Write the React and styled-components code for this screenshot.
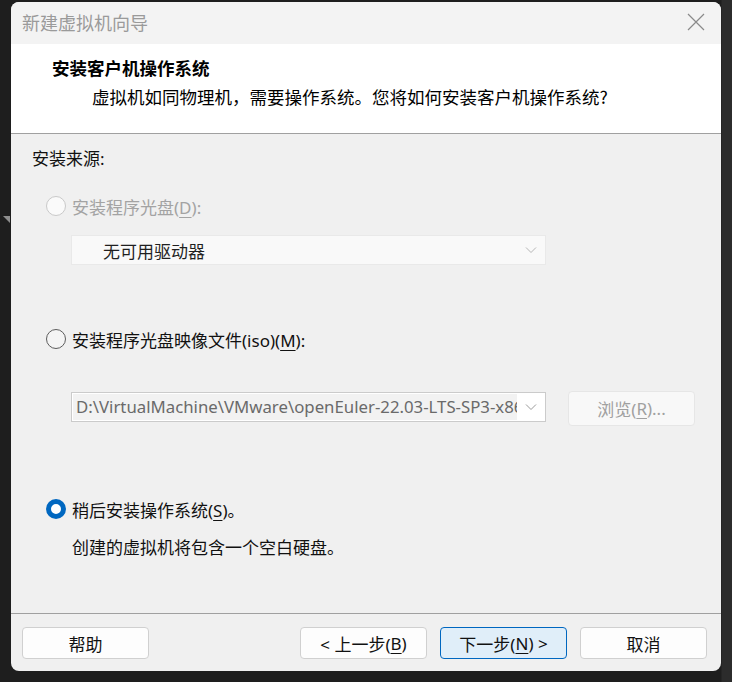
import React from "react";
import styled, { createGlobalStyle } from "styled-components";

const Global = createGlobalStyle`
  html, body { margin: 0; padding: 0; background: #1d1d1d; }
  body { font-family: "Noto Sans", "Noto Sans CJK SC", sans-serif; }
  #root { width: 732px; height: 682px; overflow: hidden; }
`;

const Page = styled.div`
  width: 732px;
  height: 682px;
  box-sizing: border-box;
  padding: 2px 11px 0 11px;
  background: linear-gradient(to right, #1e1e1e 0 721px, #2c2c2c 722px);
  position: relative;
`;

const Notch = styled.div`
  position: absolute;
  left: 3px;
  top: 216px;
  width: 0;
  height: 0;
  border-left: 7px solid transparent;
  border-top: 7px solid #8e8e8e;
`;

const Window = styled.div`
  width: 710px;
  height: 669px;
  border-radius: 8px;
  overflow: hidden;
  background: #f0f0f0;
  display: flex;
  flex-direction: column;
`;

const TitleBar = styled.div`
  height: 42px;
  flex: none;
  background: #f3f3f3;
  display: flex;
  align-items: center;
  justify-content: space-between;
  padding: 0 16px 0 11px;
`;

const TitleText = styled.div`
  font-family: "Noto Sans CJK SC", sans-serif;
  font-size: 18px;
  color: #9a9a9a;
  line-height: 24px;
  margin-top: -2px;
`;

const Close = styled.svg`
  width: 18px;
  height: 18px;
  margin-top: -2px;
`;

const Header = styled.div`
  height: 89px;
  flex: none;
  background: #ffffff;
  border-bottom: 1px solid #a0a0a0;
  box-sizing: content-box;
  padding-left: 41px;
  display: flex;
  flex-direction: column;
`;

const HeaderTitle = styled.div`
  font-family: "Noto Sans CJK SC", serif;
  font-weight: 700;
  font-size: 17.5px;
  line-height: 24px;
  color: #000;
  margin-top: 12px;
`;

const HeaderSub = styled.div`
  font-family: "Noto Sans CJK SC", sans-serif;
  font-size: 17.5px;
  line-height: 24px;
  color: #000;
  margin-top: 5px;
  padding-left: 40px;
`;

const Body = styled.div`
  flex: 1;
  padding: 14px 0 0 21px;
  display: flex;
  flex-direction: column;
  border-bottom: 1px solid #a0a0a0;
`;

const Label = styled.div`
  font-size: 17px;
  line-height: 22px;
  color: #111;
  margin-top: ${(p) => p.$mt || 0}px;
  padding-left: ${(p) => p.$pl || 0}px;
`;

const RadioRow = styled.div`
  display: flex;
  align-items: center;
  gap: 6px;
  margin-top: ${(p) => p.$mt}px;
  padding-left: 14px;
  height: 22px;
  font-size: 17px;
  color: ${(p) => (p.$disabled ? "#a3a3a3" : "#111")};
`;

const RadioCircle = styled.span`
  box-sizing: border-box;
  width: 20px;
  height: 20px;
  border-radius: 50%;
  flex: none;
  border: ${(p) =>
    p.$checked ? "5.5px solid #0067c0" : p.$disabled ? "1px solid #c9c9c9" : "1px solid #5c5c5c"};
  background: ${(p) => (p.$checked ? "#ffffff" : p.$disabled ? "#fafafa" : "#f4f4f4")};
`;

const U = styled.span`
  text-decoration: underline;
  text-underline-offset: 3px;
`;

const Select = styled.div`
  box-sizing: border-box;
  width: 475px;
  height: 30px;
  margin: ${(p) => p.$mt}px 0 0 39px;
  background: #f9f9f9;
  border: 1px solid #e9e9e9;
  display: flex;
  align-items: center;
  padding: 0 6px 0 31px;
  font-family: "Noto Sans CJK SC", sans-serif;
  font-size: 17px;
  color: #1f1f1f;
`;

const Grow = styled.span`
  flex: 1;
  white-space: nowrap;
  overflow: hidden;
`;

const Chevron = styled.svg`
  width: 12px;
  height: 8px;
  flex: none;
  margin-right: 2px;
`;

const FileRow = styled.div`
  display: flex;
  align-items: center;
  gap: 22px;
  margin: ${(p) => p.$mt}px 0 0 39px;
  height: 36px;
`;

const Combo = styled.div`
  box-sizing: border-box;
  width: 475px;
  height: 30px;
  margin-top: -2px;
  background: #ffffff;
  border: 1px solid #cbcbcb;
  display: flex;
  align-items: stretch;
  padding: 1px 6px 1px 1px;
  gap: 8px;
`;

const ComboText = styled.div`
  width: 444px;
  background: #f2f2f2;
  color: #6a6a6a;
  font-family: "Noto Sans", sans-serif;
  font-size: 16.8px;
  line-height: 26px;
  padding-left: 3px;
  white-space: nowrap;
  overflow: hidden;
  box-sizing: border-box;
`;

const ComboArrow = styled.div`
  display: flex;
  align-items: center;
`;

const Button = styled.button`
  box-sizing: border-box;
  width: 127px;
  height: ${(p) => p.$h || 32}px;
  border-radius: 4px;
  border: 1px solid ${(p) => (p.$primary ? "#0067c0" : p.$disabled ? "#e6e6e6" : "#d0d0d0")};
  background: ${(p) => (p.$primary ? "#e0eef9" : p.$disabled ? "#f8f8f8" : "#fdfdfd")};
  color: ${(p) => (p.$disabled ? "#a0a0a0" : "#111")};
  font-family: "Noto Sans", "Noto Sans CJK SC", sans-serif;
  font-size: 17px;
  padding: 0;
  display: flex;
  align-items: center;
  justify-content: center;
  white-space: pre;
`;

const Footer = styled.div`
  height: 57px;
  flex: none;
  display: flex;
  align-items: flex-start;
  padding: 13px 0 0 11px;
  box-sizing: border-box;
`;

const Spacer = styled.div`
  width: ${(p) => p.$w}px;
  flex: none;
`;

const ChevronIcon = ({ color }) => (
  <Chevron viewBox="0 0 12 8">
    <path d="M1 1.5 L6 6.5 L11 1.5" fill="none" stroke={color} strokeWidth="1" />
  </Chevron>
);

export default function App() {
  return (
    <>
      <Global />
      <Page>
        <Notch />
        <Window>
          <TitleBar>
            <TitleText>新建虚拟机向导</TitleText>
            <Close viewBox="0 0 18 18">
              <path d="M1 1 L17 17 M17 1 L1 17" stroke="#8a8a8a" strokeWidth="1.2" fill="none" />
            </Close>
          </TitleBar>
          <Header>
            <HeaderTitle>安装客户机操作系统</HeaderTitle>
            <HeaderSub>虚拟机如同物理机，需要操作系统。您将如何安装客户机操作系统?</HeaderSub>
          </Header>
          <Body>
            <Label>安装来源:</Label>
            <RadioRow $mt={25} $disabled>
              <RadioCircle $disabled />
              <span>
                安装程序光盘(<U>D</U>):
              </span>
            </RadioRow>
            <Select $mt={18}>
              <Grow>无可用驱动器</Grow>
              <ChevronIcon color="#b5b5b5" />
            </Select>
            <RadioRow $mt={63}>
              <RadioCircle />
              <span>
                安装程序光盘映像文件(iso)(<U>M</U>):
              </span>
            </RadioRow>
            <FileRow $mt={40}>
              <Combo>
                <ComboText>D:\VirtualMachine\VMware\openEuler-22.03-LTS-SP3-x86_64-dvd.iso</ComboText>
                <ComboArrow>
                  <ChevronIcon color="#9a9a9a" />
                </ComboArrow>
              </Combo>
              <Button $disabled $h={35}>
                浏览(<U>R</U>)...
              </Button>
            </FileRow>
            <RadioRow $mt={72}>
              <RadioCircle $checked />
              <span>
                稍后安装操作系统(<U>S</U>)。
              </span>
            </RadioRow>
            <Label $mt={17} $pl={40}>
              创建的虚拟机将包含一个空白硬盘。
            </Label>
          </Body>
          <Footer>
            <Button>帮助</Button>
            <Spacer $w={151} />
            <Button>
                {"< 上一步("}<U>B</U>)
            </Button>
            <Spacer $w={13} />
            <Button $primary>
              下一步(<U>N</U>){" >"}
            </Button>
            <Spacer $w={13} />
            <Button>取消</Button>
          </Footer>
        </Window>
      </Page>
    </>
  );
}
